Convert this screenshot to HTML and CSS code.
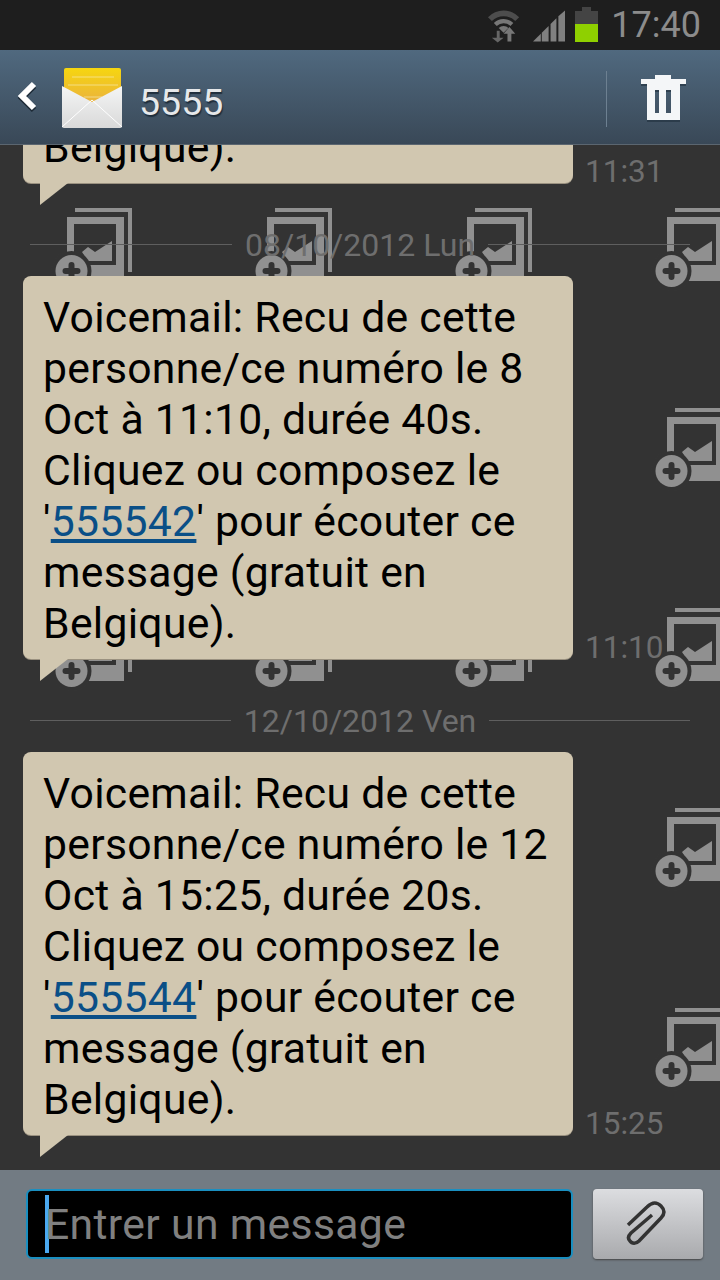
FILE: index.html
```html
<!DOCTYPE html>
<html lang="fr">
  <head>
    <meta charset="UTF-8" />
    <meta name="viewport" content="width=device-width, initial-scale=1.0" />
    <title>5555</title>
    <link rel="stylesheet" href="styles.css">
  </head>
  <body>
    <div class="phone">
      <div class="status-bar">
        <svg class="wifi" width="34" height="36" viewBox="0 0 34 36">
          <path d="M1 10 A22 22 0 0 1 33 10 L29 14 A17 17 0 0 0 5 14 Z" fill="#4d4d4d"/>
          <path d="M7 16 A14 14 0 0 1 27 16 L24 19 A10 10 0 0 0 10 19 Z" fill="#777"/>
          <path d="M12 21 A7 7 0 0 1 22 21 L17 26 Z" fill="#777"/>
          <path d="M11 26 V33 H6 L12 38 L18 33 H14 V26 Z" fill="#666" transform="translate(-1,-2)"/>
          <path d="M21 36 V28 H17 L23 21 L29 28 H25 V36 Z" fill="#777" transform="translate(0,-1)"/>
        </svg>
        <svg class="signal" width="33" height="32" viewBox="0 0 33 32">
          <polygon points="0,32 8,24 8,32" fill="#808080"/>
          <polygon points="9,32 9,23 16,16 16,32" fill="#808080"/>
          <polygon points="18,32 18,14 24,8 24,32" fill="#808080"/>
          <polygon points="26,32 26,6 33,0 33,32" fill="#808080"/>
        </svg>
        <div class="battery">
          <div class="battery-cap"></div>
          <div class="battery-empty"></div>
          <div class="battery-level"></div>
        </div>
        <span class="clock">17:40</span>
      </div>

      <header class="title-bar">
        <svg class="back" width="22" height="38" viewBox="0 0 22 38">
          <polyline points="19,5 7,17 19,29" fill="none" stroke="#1d2a36" stroke-width="6" transform="translate(0,2)"/>
          <polyline points="19,5 7,17 19,29" fill="none" stroke="#fff" stroke-width="6"/>
        </svg>
        <svg class="envelope" width="62" height="62" viewBox="0 0 62 62">
          <defs>
            <linearGradient id="flap" x1="0" y1="0" x2="0" y2="1">
              <stop offset="0" stop-color="#f6d60f"/>
              <stop offset="1" stop-color="#e9ad45"/>
            </linearGradient>
            <linearGradient id="body" x1="0" y1="0" x2="0" y2="1">
              <stop offset="0" stop-color="#f4f5f5"/>
              <stop offset="1" stop-color="#d9d9d9"/>
            </linearGradient>
          </defs>
          <rect x="2" y="1" width="57" height="40" rx="2" fill="url(#flap)"/>
          <path d="M10 10 H52 M6 18 H56 M22 30 H40" stroke="#f7e9a8" stroke-width="1" opacity="0.7"/>
          <path d="M0 19 L30 35 L60 19 V59 a2 2 0 0 1 -2 2 H2 a2 2 0 0 1 -2 -2 Z" fill="url(#body)"/>
          <path d="M0 60 L30 33 L60 60" fill="none" stroke="#fff" stroke-width="1"/>
        </svg>
        <span class="title">5555</span>
        <div class="title-divider"></div>
        <svg class="trash" width="46" height="48" viewBox="0 0 46 48">
          <path d="M14 0 H30 V4 H45 V9 H39 V45 H6 V9 H0 V4 H14 Z M14 15 V38 H18 V15 Z M25 15 V38 H30 V15 Z" fill="#1f2e3c" opacity="0.6" fill-rule="evenodd" transform="translate(0,2)"/>
          <path d="M14 0 H30 V4 H45 V9 H39 V45 H6 V9 H0 V4 H14 Z M14 15 V38 H18 V15 Z M25 15 V38 H30 V15 Z" fill="#f4f6f8" fill-rule="evenodd"/>
        </svg>
      </header>

      <main class="thread">
        <svg class="wallpaper" width="720" height="1025">
          <defs>
            <pattern id="tile" patternUnits="userSpaceOnUse" width="200" height="200" patternTransform="translate(0,55)">
              <path d="M75 8 H132 V72 H128 V12 H75 Z" fill="#909090"/>
              <path d="M67 17 H124 V81 H67 Z M74 24 V65 H116 V24 Z" fill="#909090" fill-rule="evenodd"/>
              <polygon points="82,52 88,47 95,52 112,41 112,61 88,61" fill="#909090"/>
              <circle cx="71.5" cy="71" r="20" fill="#333"/>
              <circle cx="71.5" cy="71" r="16" fill="#909090"/>
              <path d="M71.5 65 V77 M65.5 71 H77.5" stroke="#333" stroke-width="6" stroke-linecap="round"/>
            </pattern>
          </defs>
          <rect width="720" height="1025" fill="url(#tile)"/>
        </svg>

        <div class="message">
          <div class="bubble">Voicemail: Recu de cette personne/ce numéro le 8 Oct à 11:31, durée 15s. Cliquez ou composez le '<a href="#">555541</a>' pour écouter ce message (gratuit en Belgique).</div>
          <span class="time">11:31</span>
        </div>

        <div class="date-row"><span>08/10/2012 Lun</span></div>

        <div class="message">
          <div class="bubble">Voicemail: Recu de cette personne/ce numéro le 8 Oct à 11:10, durée 40s. Cliquez ou composez le '<a href="#">555542</a>' pour écouter ce message (gratuit en Belgique).</div>
          <span class="time">11:10</span>
        </div>

        <div class="date-row"><span>12/10/2012 Ven</span></div>

        <div class="message">
          <div class="bubble">Voicemail: Recu de cette personne/ce numéro le 12 Oct à 15:25, durée 20s. Cliquez ou composez le '<a href="#">555544</a>' pour écouter ce message (gratuit en Belgique).</div>
          <span class="time">15:25</span>
        </div>
      </main>

      <footer class="composer">
        <div class="input">
          <div class="cursor"></div>
          <span>Entrer un message</span>
        </div>
        <button class="attach">
          <svg width="44" height="46" viewBox="0 0 44 46">
            <path d="M2 24 L21 6 C26 1 31 1 35 5 C39 9 39 13 35 17 L13 40 C10 43 6 43 4 40 C2 38 2 35 5 32 L26 14" fill="none" stroke="#333" stroke-width="3.5"/>
          </svg>
        </button>
      </footer>
    </div>
  </body>
</html>
```

FILE: styles.css
```css
* {
  box-sizing: border-box;
}
body {
  margin: 0;
  background-color: #333;
  font-family: Roboto, sans-serif;
}
.phone {
  width: 720px;
  height: 1280px;
  display: flex;
  flex-direction: column;
  overflow: hidden;
}

/* status bar */
.status-bar {
  height: 50px;
  flex-shrink: 0;
  background-color: #1e1e1e;
  display: flex;
  align-items: flex-start;
  padding: 7px 19px 0 487px;
}
.wifi {
  margin-right: 13px;
}
.signal {
  margin-top: 3px;
  margin-right: 10px;
}
.battery {
  width: 23px;
  height: 35px;
  display: flex;
  flex-direction: column;
  align-items: center;
  margin-right: 13px;
}
.battery-cap {
  width: 9px;
  height: 4px;
  background-color: #444;
}
.battery-empty {
  width: 23px;
  height: 13px;
  background-color: #444;
}
.battery-level {
  width: 23px;
  height: 18px;
  background-color: #8fd000;
}
.clock {
  font-size: 36px;
  line-height: 36px;
  color: #8c8c8c;
}

/* title bar */
.title-bar {
  height: 95px;
  flex-shrink: 0;
  background: linear-gradient(#50697f, #394857);
  border-bottom: 1px solid #5b6670;
  display: flex;
  align-items: center;
  position: relative;
  z-index: 2;
}
.back {
  margin-left: 15px;
  margin-top: 2px;
}
.envelope {
  margin-left: 25px;
  margin-top: 2px;
}
.title {
  margin-left: 15px;
  font-size: 37.5px;
  color: #e6e8ea;
  text-shadow: 1px 2px 1px #1f2e3c;
  margin-top: 10px;
}
.title-divider {
  width: 1px;
  height: 56px;
  background-color: #6d8091;
  margin-left: auto;
  margin-top: 3px;
}
.trash {
  margin-left: 34px;
  margin-right: 33px;
  margin-top: 3px;
}

/* messages */
.thread {
  flex: 1;
  min-height: 0;
  position: relative;
  overflow: hidden;
  display: flex;
  flex-direction: column;
  justify-content: flex-end;
  padding-bottom: 35px;
}
.wallpaper {
  position: absolute;
  top: 0;
  left: 0;
}
.message {
  position: relative;
  flex-shrink: 0;
  display: flex;
  align-items: flex-end;
  padding-left: 23px;
}
.bubble {
  width: 550px;
  height: 383px;
  padding: 16px 20px 0 20px;
  background-color: #d1c7b0;
  border-radius: 8px;
  box-shadow: 0 1px 0 #9a9180;
  font-size: 42.7px;
  letter-spacing: 0.28px;
  line-height: 51px;
  color: #000;
}
.bubble a {
  color: #0a4f87;
}
.message::after {
  content: "";
  position: absolute;
  left: 40px;
  top: 100%;
  width: 28px;
  height: 22px;
  background-color: #d1c7b0;
  clip-path: polygon(0 0, 100% 0, 0 100%);
}
.time {
  margin-left: 12px;
  font-size: 31.5px;
  line-height: 22px;
  color: #6e6e6e;
  position: relative;
}
.date-row {
  position: relative;
  flex-shrink: 0;
  height: 93px;
  padding: 29px 30px 0;
  display: flex;
  align-items: center;
  gap: 13px;
  font-size: 32px;
  color: #6e6e6e;
}
.date-row::before,
.date-row::after {
  content: "";
  flex: 1;
  height: 1px;
  background-color: #5f5f5f;
}
.date-row span {
  white-space: nowrap;
  margin-top: 2px;
}

/* input */
.composer {
  height: 110px;
  flex-shrink: 0;
  background-color: #727b83;
  display: flex;
  align-items: flex-start;
  padding: 19px 17px 0 26px;
  gap: 20px;
  position: relative;
}
.input {
  width: 547px;
  height: 70px;
  background-color: #000;
  border: 2px solid #1a8fc0;
  border-radius: 6px;
  display: flex;
  align-items: center;
  padding-left: 17px;
  font-size: 42.7px;
  letter-spacing: 0.35px;
  color: #808080;
}
.cursor {
  width: 4px;
  height: 58px;
  background-color: #4aa8f0;
  margin-right: -4px;
}
.attach {
  width: 110px;
  height: 70px;
  padding: 0;
  border: none;
  border-radius: 4px;
  background: linear-gradient(#dcdde0, #a9aaad);
  box-shadow: 0 1px 2px #444;
  display: flex;
  align-items: center;
  justify-content: center;
}
```
